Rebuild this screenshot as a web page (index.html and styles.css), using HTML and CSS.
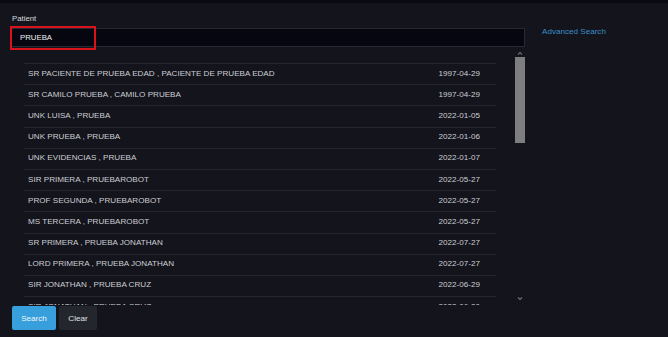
FILE: index.html
```
<!DOCTYPE html>
<html>
<head>
<meta charset="utf-8">
<link rel="stylesheet" href="styles.css">
</head>
<body>
<div class="topbar"></div>
<div class="main">
  <div class="left">
    <div class="label">Patient</div>
    <div class="field">
      <div class="input">PRUEBA</div>
      <div class="highlight"></div>
    </div>
    <div class="results">
      <div class="list">
        <div class="row"><span>SR PACIENTE DE PRUEBA EDAD , PACIENTE DE PRUEBA EDAD</span><span>1997-04-29</span></div>
        <div class="row"><span>SR CAMILO PRUEBA , CAMILO PRUEBA</span><span>1997-04-29</span></div>
        <div class="row"><span>UNK LUISA , PRUEBA</span><span>2022-01-05</span></div>
        <div class="row"><span>UNK PRUEBA , PRUEBA</span><span>2022-01-06</span></div>
        <div class="row"><span>UNK EVIDENCIAS , PRUEBA</span><span>2022-01-07</span></div>
        <div class="row"><span>SIR PRIMERA , PRUEBAROBOT</span><span>2022-05-27</span></div>
        <div class="row"><span>PROF SEGUNDA , PRUEBAROBOT</span><span>2022-05-27</span></div>
        <div class="row"><span>MS TERCERA , PRUEBAROBOT</span><span>2022-05-27</span></div>
        <div class="row"><span>SR PRIMERA , PRUEBA JONATHAN</span><span>2022-07-27</span></div>
        <div class="row"><span>LORD PRIMERA , PRUEBA JONATHAN</span><span>2022-07-27</span></div>
        <div class="row"><span>SIR JONATHAN , PRUEBA CRUZ</span><span>2022-06-29</span></div>
        <div class="row"><span>SIR JONATHAN , PRUEBA CRUZ</span><span>2022-06-30</span></div>
      </div>
      <div class="scrollbar">
        <svg class="arrow" width="10" height="6" viewBox="0 0 10 6"><path d="M3 4.5 L5 2.5 L7 4.5" fill="none" stroke="#6c6d73" stroke-width="1.2"/></svg>
        <div class="thumb"></div>
        <div class="track"></div>
        <svg class="arrow" width="10" height="6" viewBox="0 0 10 6"><path d="M3 1.5 L5 3.5 L7 1.5" fill="none" stroke="#6c6d73" stroke-width="1.2"/></svg>
      </div>
    </div>
    <div class="buttons">
      <button class="btn primary">Search</button>
      <button class="btn secondary">Clear</button>
    </div>
  </div>
  <div class="right">
    <a class="adv">Advanced Search</a>
  </div>
</div>
</body>
</html>
```
FILE: styles.css
```
html, body {
  margin: 0;
  padding: 0;
  background: #13141c;
  font-family: "Liberation Sans", Arial, sans-serif;
  width: 668px;
  height: 337px;
  overflow: hidden;
}
.topbar {
  height: 3px;
  background: #0a0b12;
}
.main {
  display: flex;
  padding: 11px 0 0 10px;
}
.left {
  width: 515px;
  display: flex;
  flex-direction: column;
}
.label {
  font-size: 7.8px;
  line-height: 10px;
  color: #d8d9de;
  margin-left: 2px;
  margin-bottom: 4px;
}
.field {
  position: relative;
}
.input {
  height: 19px;
  box-sizing: border-box;
  background: #05060f;
  border: 1px solid #262833;
  padding-left: 9px;
  font-size: 7.8px;
  line-height: 17px;
  color: #f0f0f4;
}
.highlight {
  position: absolute;
  left: 0;
  top: -2px;
  width: 86px;
  height: 24px;
  box-sizing: border-box;
  border: 2px solid #d8131c;
}
.results {
  display: flex;
  height: 255px;
  margin-top: 3px;
}
.list {
  margin-left: 14px;
  width: 472px;
  padding-top: 13px;
  overflow: hidden;
}
.row {
  height: 21.2px;
  box-sizing: border-box;
  border-top: 1px solid #252731;
  display: flex;
  justify-content: space-between;
  align-items: center;
  padding: 0 16px 2px 4px;
  font-size: 8.1px;
  color: #cdced3;
}
.scrollbar {
  margin-left: 19px;
  width: 10px;
  display: flex;
  flex-direction: column;
  align-items: center;
}
.arrow {
  display: block;
  flex: none;
}
.thumb {
  width: 10px;
  height: 86px;
  margin-top: 1px;
  background: #7d7d82;
  flex: none;
}
.track {
  flex: 1;
}
.scrollbar .arrow:last-child {
  margin-bottom: 3px;
}
.buttons {
  display: flex;
  gap: 3px;
  margin-left: 2px;
  margin-top: 1px;
}
.btn {
  height: 24px;
  border: none;
  border-radius: 2px;
  font-family: "Liberation Sans", Arial, sans-serif;
  font-size: 8.1px;
  padding: 0;
  cursor: pointer;
}
.primary {
  width: 44px;
  background: #369fdc;
  color: #f2f6fa;
}
.secondary {
  width: 38px;
  background: #24262e;
  color: #e2e3e8;
}
.right {
  padding-left: 17px;
  padding-top: 13px;
}
.adv {
  font-size: 8.1px;
  color: #3b8ecb;
  line-height: 10px;
  display: block;
}
```
